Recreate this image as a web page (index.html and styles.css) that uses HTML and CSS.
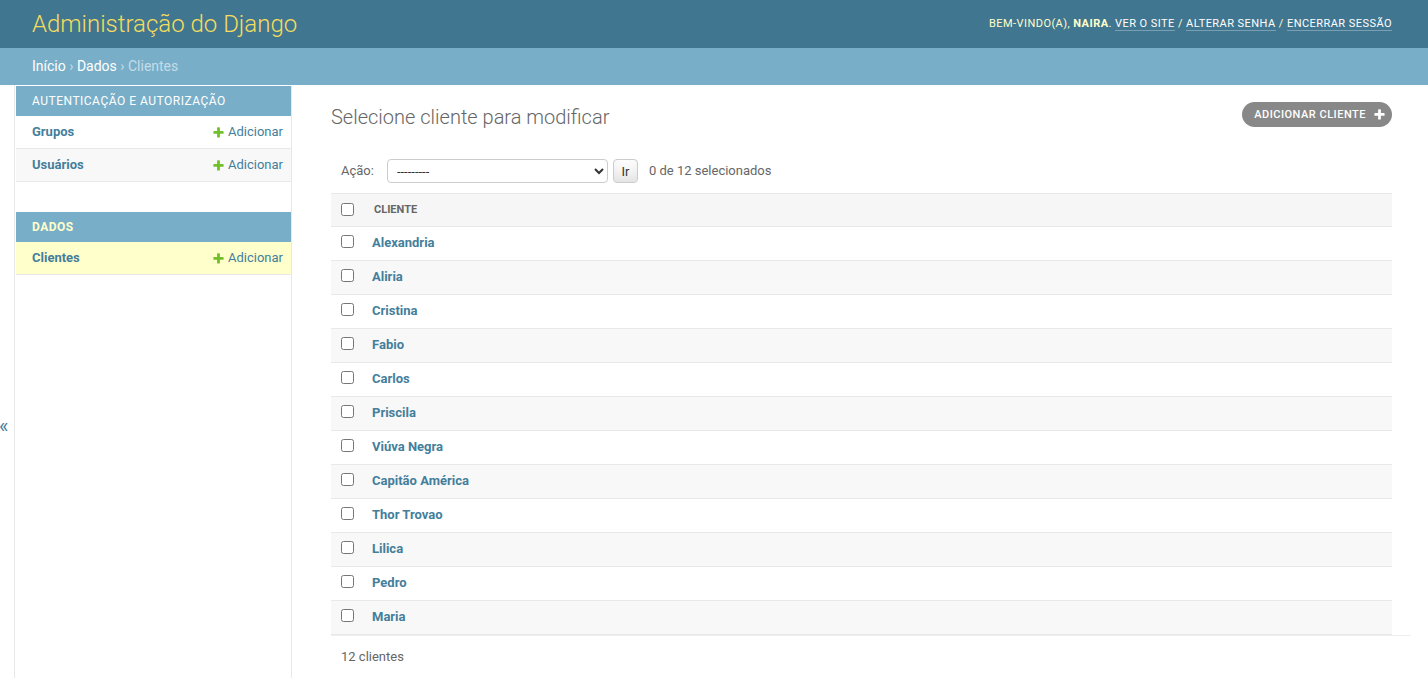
FILE: index.html
```html
<!DOCTYPE html>
<html lang="pt-br">
<head>
<meta charset="utf-8">
<title>Selecione cliente para modificar | Administração do Django</title>
<link rel="stylesheet" href="styles.css">
</head>
<body>
<header class="header">
  <h1 class="site-name"><a href="#">Administração do Django</a></h1>
  <div class="user-tools">Bem-vindo(a), <strong>naira</strong>. <a href="#">Ver o site</a> / <a href="#">Alterar senha</a> / <a href="#">Encerrar sessão</a></div>
</header>
<nav class="breadcrumbs"><a href="#">Início</a> › <a href="#">Dados</a> › Clientes</nav>
<div class="main">
  <div class="toggle"><span class="toggle-glyph">«</span></div>
  <nav class="sidebar">
    <div class="module">
      <table>
        <caption>Autenticação e Autorização</caption>
        <tr><th><a href="#">Grupos</a></th><td><a href="#" class="addlink"><svg width="13" height="13" viewBox="0 0 1792 1792"><path fill="#70bf2b" d="M1600 796v192q0 40-28 68t-68 28h-416v416q0 40-28 68t-68 28h-192q-40 0-68-28t-28-68v-416h-416q-40 0-68-28t-28-68v-192q0-40 28-68t68-28h416v-416q0-40 28-68t68-28h192q40 0 68 28t28 68v416h416q40 0 68 28t28 68z"/></svg>Adicionar</a></td></tr>
        <tr><th><a href="#">Usuários</a></th><td><a href="#" class="addlink"><svg width="13" height="13" viewBox="0 0 1792 1792"><path fill="#70bf2b" d="M1600 796v192q0 40-28 68t-68 28h-416v416q0 40-28 68t-68 28h-192q-40 0-68-28t-28-68v-416h-416q-40 0-68-28t-28-68v-192q0-40 28-68t68-28h416v-416q0-40 28-68t68-28h192q40 0 68 28t28 68v416h416q40 0 68 28t28 68z"/></svg>Adicionar</a></td></tr>
      </table>
    </div>
    <div class="module current-app">
      <table>
        <caption>Dados</caption>
        <tr class="current-model"><th><a href="#">Clientes</a></th><td><a href="#" class="addlink"><svg width="13" height="13" viewBox="0 0 1792 1792"><path fill="#70bf2b" d="M1600 796v192q0 40-28 68t-68 28h-416v416q0 40-28 68t-68 28h-192q-40 0-68-28t-28-68v-416h-416q-40 0-68-28t-28-68v-192q0-40 28-68t68-28h416v-416q0-40 28-68t68-28h192q40 0 68 28t28 68v416h416q40 0 68 28t28 68z"/></svg>Adicionar</a></td></tr>
      </table>
    </div>
  </nav>
  <main class="content">
    <div class="content-head">
      <h1 class="title">Selecione cliente para modificar</h1>
      <a href="#" class="object-add">Adicionar cliente<svg width="13" height="13" viewBox="0 0 1792 1792"><path fill="#fff" d="M1600 796v192q0 40-28 68t-68 28h-416v416q0 40-28 68t-68 28h-192q-40 0-68-28t-28-68v-416h-416q-40 0-68-28t-28-68v-192q0-40 28-68t68-28h416v-416q0-40 28-68t68-28h192q40 0 68 28t28 68v416h416q40 0 68 28t28 68z"/></svg></a>
    </div>
    <div class="actions">
      <label class="action-label">Ação:</label>
      <select class="action-select"><option>---------</option><option>Remover clientes selecionados</option></select>
      <button class="go-button" type="button">Ir</button>
      <span class="action-counter">0 de 12 selecionados</span>
    </div>
    <table class="results">
      <thead>
        <tr><th class="check-col"><input type="checkbox" class="cb"></th><th><span class="col-text">Cliente</span></th></tr>
      </thead>
      <tbody>
        <tr><td class="check-col"><input type="checkbox" class="cb"></td><th><a href="#">Alexandria</a></th></tr>
        <tr><td class="check-col"><input type="checkbox" class="cb"></td><th><a href="#">Aliria</a></th></tr>
        <tr><td class="check-col"><input type="checkbox" class="cb"></td><th><a href="#">Cristina</a></th></tr>
        <tr><td class="check-col"><input type="checkbox" class="cb"></td><th><a href="#">Fabio</a></th></tr>
        <tr><td class="check-col"><input type="checkbox" class="cb"></td><th><a href="#">Carlos</a></th></tr>
        <tr><td class="check-col"><input type="checkbox" class="cb"></td><th><a href="#">Priscila</a></th></tr>
        <tr><td class="check-col"><input type="checkbox" class="cb"></td><th><a href="#">Viúva Negra</a></th></tr>
        <tr><td class="check-col"><input type="checkbox" class="cb"></td><th><a href="#">Capitão América</a></th></tr>
        <tr><td class="check-col"><input type="checkbox" class="cb"></td><th><a href="#">Thor Trovao</a></th></tr>
        <tr><td class="check-col"><input type="checkbox" class="cb"></td><th><a href="#">Lilica</a></th></tr>
        <tr><td class="check-col"><input type="checkbox" class="cb"></td><th><a href="#">Pedro</a></th></tr>
        <tr><td class="check-col"><input type="checkbox" class="cb"></td><th><a href="#">Maria</a></th></tr>
      </tbody>
    </table>
    <p class="paginator">12 clientes</p>
  </main>
</div>
</body>
</html>
```
FILE: styles.css
```css
html, body {
  margin: 0;
  padding: 0;
}
body {
  font-family: Roboto, "Liberation Sans", sans-serif;
  font-size: 14px;
  color: #333;
  background: #fff;
}
a {
  color: #447e9b;
  text-decoration: none;
}

/* Header */
.header {
  display: flex;
  justify-content: space-between;
  align-items: center;
  height: 48px;
  box-sizing: border-box;
  padding: 10px 36px 10px 32px;
  background: #417690;
  color: #ffc;
}
.site-name {
  margin: 0;
  font-size: 24px;
  font-weight: 300;
  line-height: 28px;
}
.site-name a {
  color: #f5dd5d;
}
.user-tools {
  font-size: 11px;
  line-height: 14px;
  letter-spacing: 0.45px;
  text-transform: uppercase;
  color: #ffc;
}
.user-tools strong {
  font-weight: 700;
}
.user-tools a {
  color: #fff;
  border-bottom: 1px solid rgba(255, 255, 255, 0.3);
}

/* Breadcrumbs */
.breadcrumbs {
  background: #79aec8;
  padding: 10px 32px;
  font-size: 14px;
  line-height: 17px;
  color: #c4dce8;
}
.breadcrumbs a {
  color: #fff;
}

/* Main */
.main {
  display: flex;
  min-height: calc(100vh - 85px);
}
.toggle {
  flex: 0 0 14px;
  border-right: 1px solid #e8e8e8;
  display: flex;
  flex-direction: column;
}
.toggle-glyph {
  height: 100vh;
  display: flex;
  align-items: center;
  justify-content: flex-start;
  font-size: 20px;
  color: #447e9b;
  margin-left: -1px;
  padding-top: 4px;
  box-sizing: border-box;
}

/* Sidebar */
.sidebar {
  flex: 0 0 275px;
  padding-left: 1px;
  border-right: 1px solid #e8e8e8;
  border-top: 1px solid transparent;
}
.module {
  margin-bottom: 30px;
}
.module table {
  width: 100%;
  border-collapse: collapse;
}
.module caption {
  text-align: left;
  padding: 8px 16px;
  background: #79aec8;
  color: #fff;
  font-size: 12px;
  line-height: 14px;
  letter-spacing: 0.5px;
  text-transform: uppercase;
  font-weight: 400;
}
.current-app caption {
  color: #ffc;
  font-weight: 700;
}
.module th {
  text-align: left;
  padding: 8px 8px 8px 16px;
  font-size: 13px;
  line-height: 16px;
  font-weight: 700;
  vertical-align: top;
  border-bottom: 1px solid #e8e8e8;
}
.module td {
  text-align: right;
  padding: 8px;
  font-size: 13px;
  line-height: 16px;
  white-space: nowrap;
  vertical-align: top;
  border-bottom: 1px solid #e8e8e8;
}
.module tr:nth-child(even) {
  background: #f8f8f8;
}
.module tr.current-model {
  background: #ffc;
}
.addlink {
  display: inline-flex;
  align-items: center;
  vertical-align: top;
  height: 16px;
  gap: 3px;
}
.addlink svg {
  display: block;
}

/* Content */
.content {
  flex: 1;
  min-width: 0;
  padding: 17px 36px 0 39px;
}
.content-head {
  display: flex;
  justify-content: space-between;
  align-items: flex-start;
  margin-bottom: 19px;
}
.title {
  margin: 3px 0 0;
  font-size: 20px;
  line-height: 25px;
  font-weight: 300;
  color: #666;
}
.object-add {
  display: flex;
  align-items: center;
  gap: 7px;
  height: 25px;
  padding: 0 6px 0 12px;
  background: #888;
  color: #fff;
  border-radius: 15px;
  font-size: 11px;
  font-weight: 500;
  letter-spacing: 0.5px;
  text-transform: uppercase;
}
.object-add svg {
  display: block;
}

/* Actions */
.actions {
  display: flex;
  align-items: center;
  padding: 10px;
  line-height: 24px;
  font-size: 13px;
  color: #666;
}
.action-select {
  margin-left: 13px;
  width: 221px;
  height: 24px;
  box-sizing: border-box;
  border: 1px solid #ccc;
  border-radius: 4px;
  background: #fff;
  color: #333;
  font-family: Roboto, "Liberation Sans", sans-serif;
  font-size: 13px;
  padding: 0 0 0 5px;
}
.go-button {
  margin-left: 5px;
  height: 24px;
  width: 25px;
  box-sizing: border-box;
  padding: 0;
  border: 1px solid #ccc;
  border-radius: 4px;
  background: #fff;
  box-shadow: 0 -15px 20px -10px rgba(0, 0, 0, 0.15) inset;
  font-family: Roboto, "Liberation Sans", sans-serif;
  font-size: 13px;
  color: #333;
}
.action-counter {
  margin-left: 11px;
}

/* Results */
.results {
  width: 100%;
  border-collapse: collapse;
}
.results thead th {
  background: #f6f6f6;
  border-top: 1px solid #e8e8e8;
  border-bottom: 1px solid #e8e8e8;
  padding: 0;
  text-align: left;
  font-size: 11px;
  font-weight: 700;
  color: #666;
  text-transform: uppercase;
  vertical-align: middle;
}
.col-text {
  display: block;
  padding: 8px 10px;
  line-height: 16px;
}
.results .check-col {
  width: 33px;
  box-sizing: border-box;
  text-align: center;
  padding: 0;
}
.cb {
  width: 13px;
  height: 13px;
  display: block;
  margin: 0 auto;
}
.results thead .cb {
  margin-top: -2px;
}
.results tbody td,
.results tbody th {
  padding: 7px 8px 9px;
  line-height: 17px;
  font-size: 13px;
  text-align: left;
  vertical-align: top;
  border-bottom: 1px solid #e8e8e8;
}
.results tbody td.check-col {
  padding: 8px 0;
}
.results tbody th {
  font-weight: 700;
}
.results tbody tr:nth-child(even) {
  background: #f8f8f8;
}
.paginator {
  margin: 0 -19px 0 0;
  padding: 10px;
  line-height: 22px;
  font-size: 13px;
  color: #666;
  border-top: 1px solid #eee;
}
```
